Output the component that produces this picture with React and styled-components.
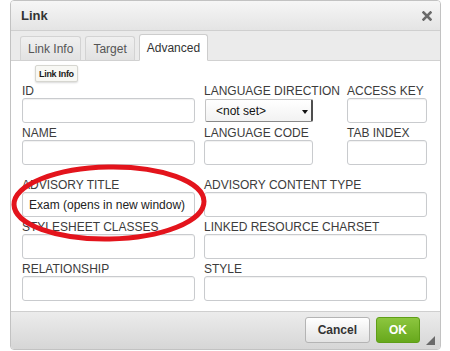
import React from "react";
import styled, { createGlobalStyle } from "styled-components";

const GlobalStyle = createGlobalStyle`
  html, body { margin: 0; padding: 0; background: #ffffff; }
  body { font-family: "Liberation Sans", Arial, sans-serif; }
  * { box-sizing: border-box; }
`;

const Page = styled.div`
  padding: 0 9px 0 10px;
  height: 351px;
`;

const Dialog = styled.div`
  width: 431px;
  border: 1px solid #c2c2c2;
  border-radius: 4px;
  overflow: hidden;
  background: #fff;
`;

const TitleBar = styled.div`
  height: 30px;
  border-bottom: 1px solid #cfcfcf;
  background: linear-gradient(#f6f6f6, #e4e4e4);
  display: flex;
  align-items: center;
  justify-content: space-between;
  padding: 0 8px 1px 10px;
`;

const Title = styled.div`
  font-size: 13px;
  font-weight: bold;
  color: #333;
`;

const Close = styled.svg`
  width: 10px;
  height: 10px;
  margin-top: 1px;
`;

const TabBar = styled.div`
  height: 30px;
  background: #ebebeb;
  border-bottom: 1px solid #d1d1d1;
  display: flex;
  align-items: flex-end;
  gap: 4px;
  padding-left: 9px;
`;

const Tab = styled.div`
  height: ${(p) => (p.$active ? 27 : 25)}px;
  margin-bottom: -1px;
  padding: 0 7px;
  display: flex;
  align-items: center;
  font-size: 12px;
  color: ${(p) => (p.$active ? "#333" : "#555")};
  border: 1px solid ${(p) => (p.$active ? "#cdcdcd" : "#d3d3d3")};
  border-bottom: ${(p) => (p.$active ? "1px solid #fff" : "1px solid #d1d1d1")};
  border-radius: 3px 3px 0 0;
  background: ${(p) => (p.$active ? "#fff" : "linear-gradient(#f0f0f0, #e2e2e2)")};
`;

const Content = styled.div`
  position: relative;
  padding: 24px 12px 10px 11px;
  background: #fff;
`;

const Tooltip = styled.div`
  position: absolute;
  left: 24px;
  top: 4px;
  height: 17px;
  padding: 0 3px;
  display: flex;
  align-items: center;
  font-size: 9px;
  font-weight: bold;
  letter-spacing: -0.3px;
  color: #1a1a1a;
  background: #f8f8f4;
  border: 1px solid #d6d6d0;
  box-shadow: 0 1px 2px rgba(0, 0, 0, 0.15);
  border-radius: 2px;
`;

const Grid = styled.div`
  display: grid;
  grid-template-columns: ${(p) => p.$cols};
  column-gap: 9px;
  row-gap: 4px;
  margin-top: ${(p) => p.$top || 0}px;
`;

const Field = styled.div`
  display: flex;
  flex-direction: column;
  margin-left: ${(p) => p.$shift || 0}px;
`;

const Label = styled.div`
  height: 13px;
  line-height: 13px;
  font-size: 12px;
  color: #3c3c3c;
  white-space: nowrap;
`;

const Input = styled.div`
  height: 25px;
  border: 1px solid #c9cbce;
  border-radius: 3px;
  background: #fff;
  box-shadow: inset 0 1px 1px rgba(0, 0, 0, 0.06);
  font-size: 12px;
  color: #222;
  display: flex;
  align-items: center;
  padding-left: 6px;
`;

const Select = styled.div`
  height: 23px;
  margin-top: 1px;
  margin-left: 1px;
  border: 1px solid #c4c4c4;
  border-right: 2px solid #4e4e4e;
  border-bottom: 1px solid #8a8a8a;
  border-radius: 2px;
  background: linear-gradient(#ffffff, #f2f2f2);
  display: flex;
  align-items: center;
  justify-content: space-between;
  padding: 0 3px 0 10px;
  font-size: 12px;
  color: #111;
`;

const Arrow = styled.span`
  width: 0;
  height: 0;
  border-left: 3px solid transparent;
  border-right: 3px solid transparent;
  border-top: 4px solid #111;
  margin-top: 3px;
`;

const Ring = styled.svg`
  position: absolute;
  left: 0;
  top: 0;
  width: 100%;
  height: 100%;
  pointer-events: none;
  overflow: visible;
`;

const Footer = styled.div`
  height: 38px;
  border-top: 1px solid #cfcfcf;
  background: linear-gradient(#ececec, #d6d6d6);
  display: flex;
  align-items: flex-start;
  justify-content: flex-end;
  padding: 5px 5px 0 0;
`;

const Button = styled.div`
  height: 26px;
  padding: 0 12px;
  border-radius: 3px;
  display: flex;
  align-items: center;
  font-size: 12px;
  font-weight: bold;
  margin-left: 6px;
  color: ${(p) => (p.$primary ? "#fff" : "#333")};
  border: 1px solid ${(p) => (p.$primary ? "#5f9e17" : "#b4b4b4")};
  background: ${(p) =>
    p.$primary ? "linear-gradient(#8cc63f, #67a81c)" : "linear-gradient(#ffffff, #e3e3e3)"};
`;

const Grip = styled.svg`
  width: 9px;
  height: 9px;
  margin: 19px 0 0 6px;
`;

const fields1 = [
  { label: "ID" },
  { label: "LANGUAGE DIRECTION", select: true },
  { label: "ACCESS KEY", shift: 25 },
  { label: "NAME" },
  { label: "LANGUAGE CODE" },
  { label: "TAB INDEX", shift: 25 },
];

const fields2 = [
  { label: "ADVISORY TITLE", value: "Exam (opens in new window)" },
  { label: "ADVISORY CONTENT TYPE" },
  { label: "STYLESHEET CLASSES" },
  { label: "LINKED RESOURCE CHARSET" },
  { label: "RELATIONSHIP" },
  { label: "STYLE" },
];

export default function App() {
  return (
    <>
      <GlobalStyle />
      <Page>
        <Dialog>
          <TitleBar>
            <Title>Link</Title>
            <Close viewBox="0 0 10 10">
              <path d="M1.5 1.5 L8.5 8.5 M8.5 1.5 L1.5 8.5" stroke="#6b6b6b" strokeWidth="2.6" strokeLinecap="square" />
            </Close>
          </TitleBar>
          <TabBar>
            <Tab>Link Info</Tab>
            <Tab>Target</Tab>
            <Tab $active>Advanced</Tab>
          </TabBar>
          <Content>
            <Tooltip>Link Info</Tooltip>
            <Grid $cols="173px 109px 105px">
              {fields1.map((f, i) => (
                <Field key={i} $shift={f.shift}>
                  <Label>{f.label}</Label>
                  {f.select ? (
                    <Select>
                      &lt;not set&gt;
                      <Arrow />
                    </Select>
                  ) : (
                    <Input />
                  )}
                </Field>
              ))}
            </Grid>
            <Grid $cols="173px 223px" $top={14}>
              {fields2.map((f, i) => (
                <Field key={i}>
                  <Label>{f.label}</Label>
                  <Input>{f.value}</Input>
                </Field>
              ))}
            </Grid>
            <Ring>
              <ellipse cx="98" cy="142" rx="95" ry="36" fill="none" stroke="#e3141c" strokeWidth="5" transform="rotate(-1 98 142)" />
            </Ring>
          </Content>
          <Footer>
            <Button>Cancel</Button>
            <Button $primary>OK</Button>
            <Grip viewBox="0 0 9 9">
              <polygon points="9,0 9,9 0,9" fill="#6a6a6a" />
            </Grip>
          </Footer>
        </Dialog>
      </Page>
    </>
  );
}
